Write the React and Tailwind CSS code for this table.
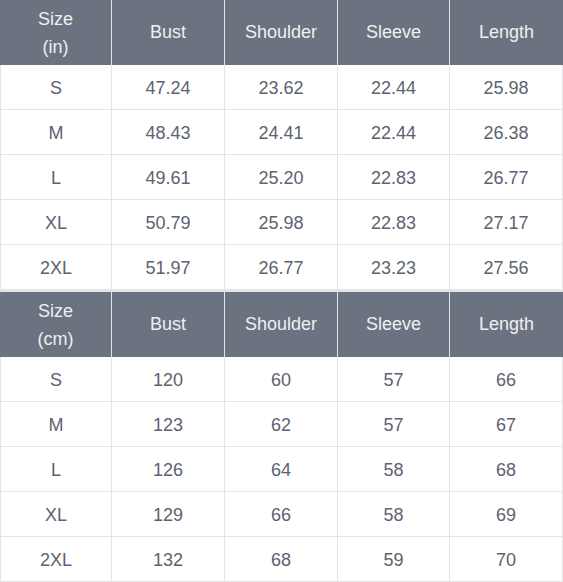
const cols = ["Bust", "Shoulder", "Sleeve", "Length"]

const inchRows = [
  ["S", "47.24", "23.62", "22.44", "25.98"],
  ["M", "48.43", "24.41", "22.44", "26.38"],
  ["L", "49.61", "25.20", "22.83", "26.77"],
  ["XL", "50.79", "25.98", "22.83", "27.17"],
  ["2XL", "51.97", "26.77", "23.23", "27.56"],
]

const cmRows = [
  ["S", "120", "60", "57", "66"],
  ["M", "123", "62", "57", "67"],
  ["L", "126", "64", "58", "68"],
  ["XL", "129", "66", "58", "69"],
  ["2XL", "132", "68", "59", "70"],
]

const SizeTable = ({ unit, rows, top }) => (
  <div className={`grid grid-cols-[112px_113px_113px_112px_113px] ${top ? "border-t-2 border-[#e4e4e7]" : ""}`}>
    <div className="h-[65px] bg-[#6b7280] text-[#eef0f2] border-r border-[#e4e4e7] flex flex-col items-center justify-center leading-[28px]">
      <span>Size</span>
      <span>({unit})</span>
    </div>
    {cols.map((c, i) => (
      <div
        key={c}
        className={`h-[65px] bg-[#6b7280] text-[#eef0f2] flex items-center justify-center ${i < 3 ? "border-r border-[#e4e4e7]" : ""}`}
      >
        {c}
      </div>
    ))}
    {rows.map((r) =>
      r.map((v, i) => (
        <div
          key={r[0] + i}
          className={`h-[45px] pt-[3px] flex items-center justify-center text-[#5d6270] border-b border-r border-[#e4e4e7] ${i === 0 ? "border-l" : ""}`}
        >
          {v}
        </div>
      ))
    )}
  </div>
)

export default function App() {
  return (
    <div className="w-[563px] bg-white text-[18px] font-['Liberation_Sans',Arial,sans-serif]">
      <SizeTable unit="in" rows={inchRows} />
      <SizeTable unit="cm" rows={cmRows} top />
    </div>
  )
}
